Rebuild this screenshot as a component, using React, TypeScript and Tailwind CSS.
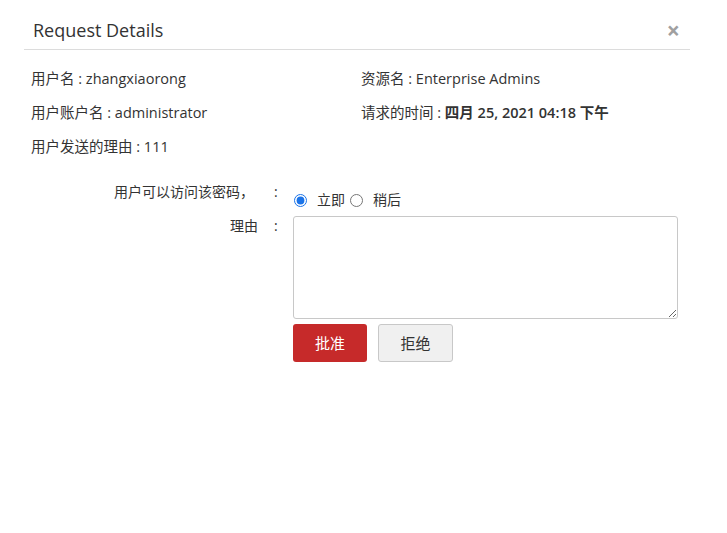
import { useState } from "react";

const font = "font-['Open_Sans','Noto_Sans_CJK_SC',sans-serif]";

export default function App() {
  const [when, setWhen] = useState("now");

  const info = [
    ["用户名", "zhangxiaorong", "资源名", "Enterprise Admins"],
    ["用户账户名", "administrator", "请求的时间", "四月 25, 2021 04:18 下午"],
    ["用户发送的理由", "111", "", ""],
  ];

  return (
    <div className={`w-[727px] h-[533px] bg-white text-[#333] ${font}`}>
      {/* header */}
      <div className="ml-[24px] w-[666px] flex items-center justify-between border-b border-[#dcdcdc] pt-[18px] pb-[7px]">
        <h1 className="pl-[9px] text-[18px] leading-[24px] text-[#333] font-normal">Request Details</h1>
        <span className="mr-[10px] text-[23px] leading-[24px] font-bold text-[#a0a0a0]">×</span>
      </div>

      {/* info */}
      <div className="pl-[31px] mt-[19px] flex flex-col gap-[14px] text-[14.5px] leading-[20px]">
        {info.map((r) => (
          <div key={r[0]} className="flex">
            <div className="w-[330px]">
              {r[0]} : {r[1]}
            </div>
            {r[2] && (
              <div>
                {r[2]} : <span className={r[2] === "请求的时间" ? "font-semibold" : ""}>{r[3]}</span>
              </div>
            )}
          </div>
        ))}
      </div>

      {/* form */}
      <div className="mt-[25px] text-[14px] leading-[20px]">
        <div className="flex">
          <div className="w-[266px] text-right pr-[12px]">用户可以访问该密码，</div>
          <div className="w-[27px] pl-[8px]">:</div>
          <div className="mt-[8px] flex items-center">
            <input
              type="radio"
              name="when"
              checked={when === "now"}
              onChange={() => setWhen("now")}
              className="m-0 w-[13px] h-[13px] ml-[1px] accent-[#1a73e8]"
            />
            <span className="ml-[10px]">立即</span>
            <input
              type="radio"
              name="when"
              checked={when === "later"}
              onChange={() => setWhen("later")}
              className="m-0 w-[13px] h-[13px] ml-[5px]"
            />
            <span className="ml-[10px]">稍后</span>
          </div>
        </div>

        <div className="flex mt-[6px]">
          <div className="w-[266px] text-right pr-[8px]">理由</div>
          <div className="w-[27px] pl-[8px]">:</div>
          <div className="flex flex-col">
            <textarea className="w-[385px] h-[103px] border border-[#c8c8c8] rounded-[3px] outline-none resize" />
            <div className="flex gap-[11px] mt-[5px]">
              <button className="w-[74px] h-[38px] bg-[#c62a2a] text-white text-[15px] rounded-[3px]">批准</button>
              <button className="w-[75px] h-[38px] bg-[#f0f0f0] border border-[#c8c8c8] text-[#333] text-[15px] rounded-[3px]">拒绝</button>
            </div>
          </div>
        </div>
      </div>
    </div>
  );
}
